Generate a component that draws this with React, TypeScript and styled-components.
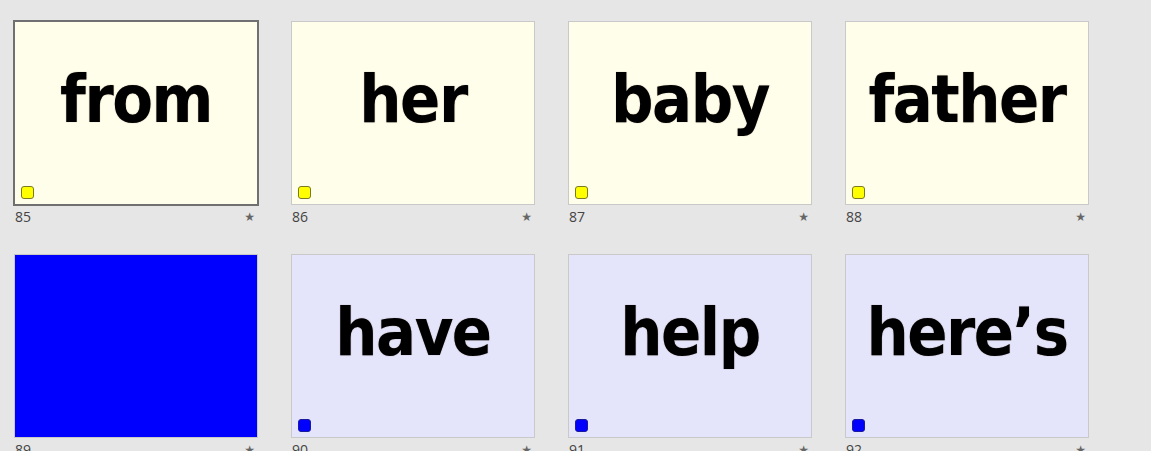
import React from "react";
import styled, { createGlobalStyle } from "styled-components";

const Global = createGlobalStyle`
  html, body { margin: 0; padding: 0; background: #e6e6e6; overflow: hidden; }
  body { width: 1151px; height: 451px; }
`;

type Theme = "yellow" | "lavender" | "blue";

const fills: Record<Theme, string> = {
  yellow: "#fffeeb",
  lavender: "#e4e4fa",
  blue: "#0000ff",
};

const Sorter = styled.div`
  display: grid;
  grid-template-columns: repeat(4, 246px);
  column-gap: 31px;
  row-gap: 26px;
  padding: 20px 0 0 13px;
`;

const Cell = styled.div`
  display: flex;
  flex-direction: column;
  width: 246px;
`;

const Frame = styled.div<{ $selected?: boolean }>`
  width: 246px;
  height: 186px;
  box-sizing: border-box;
  border: 1px solid ${(p) => (p.$selected ? "#707070" : "transparent")};
  display: flex;
`;

const Slide = styled.div<{ $theme: Theme; $selected?: boolean }>`
  position: relative;
  flex: 1;
  box-sizing: border-box;
  border: 1px solid ${(p) => (p.$selected ? "#707070" : "#c9c9c9")};
  background: ${(p) => fills[p.$theme]};
  display: flex;
  justify-content: center;
  align-items: flex-start;
`;

const Word = styled.div`
  margin-top: 45px;
  font-family: "DejaVu Sans Condensed", "DejaVu Sans", sans-serif;
  font-stretch: condensed;
  font-weight: 700;
  font-size: 66px;
  line-height: 1;
  color: #000;
  letter-spacing: -1.5px;
  text-shadow: 0 0 1px rgba(60, 30, 0, 0.5);
`;

const Tag = styled.span<{ $color: string }>`
  position: absolute;
  left: 6px;
  bottom: 5px;
  width: 13px;
  height: 13px;
  box-sizing: border-box;
  border-radius: 3px;
  background: ${(p) => p.$color};
  border: 1px solid ${(p) => (p.$color === "#ffff00" ? "#7a7a20" : "#1a1a9a")};
`;

const Label = styled.div`
  display: flex;
  justify-content: space-between;
  align-items: center;
  height: 21px;
  padding: 0 4px 0 2px;
  font-family: "Open Sans", "Liberation Sans", sans-serif;
  font-size: 14px;
  color: #444;
`;

const Star = styled.span`
  font-family: "DejaVu Sans", sans-serif;
  font-size: 12px;
  color: #666;
`;

type Item = { n: number; word?: string; theme: Theme; selected?: boolean };

const items: Item[] = [
  { n: 85, word: "from", theme: "yellow", selected: true },
  { n: 86, word: "her", theme: "yellow" },
  { n: 87, word: "baby", theme: "yellow" },
  { n: 88, word: "father", theme: "yellow" },
  { n: 89, theme: "blue" },
  { n: 90, word: "have", theme: "lavender" },
  { n: 91, word: "help", theme: "lavender" },
  { n: 92, word: "here\u2019s", theme: "lavender" },
];

export default function App() {
  return (
    <>
      <Global />
      <Sorter>
        {items.map((it) => (
          <Cell key={it.n}>
            <Frame $selected={it.selected}>
              <Slide $theme={it.theme} $selected={it.selected}>
                {it.word && <Word>{it.word}</Word>}
                {it.theme !== "blue" && (
                  <Tag $color={it.theme === "yellow" ? "#ffff00" : "#0000ff"} />
                )}
              </Slide>
            </Frame>
            <Label>
              <span>{it.n}</span>
              <Star>★</Star>
            </Label>
          </Cell>
        ))}
      </Sorter>
    </>
  );
}
